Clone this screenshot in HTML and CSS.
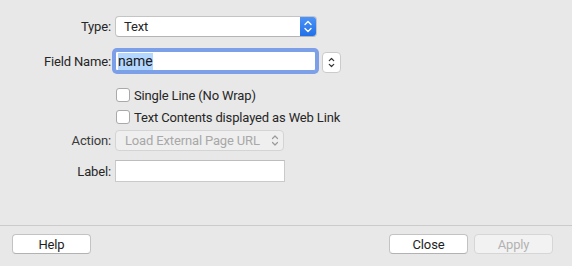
FILE: index.html
```html
<!DOCTYPE html>
<html>
<head>
    <title>Field Properties</title>
    <link rel="stylesheet" href="styles.css">
</head>
<body>
    <div class="dialog">
        <div class="form">
            <div class="row row-type">
                <span class="label">Type:</span>
                <div class="popup">
                    <span class="popup-text">Text</span>
                    <span class="popup-arrows">
                        <svg width="16" height="21" viewBox="0 0 16 21"><path d="M5 8.5 L8 5.5 L11 8.5 M5 12.5 L8 15.5 L11 12.5" fill="none" stroke="#fff" stroke-width="1.4" stroke-linecap="round" stroke-linejoin="round"/></svg>
                    </span>
                </div>
            </div>
            <div class="row row-name">
                <span class="label">Field Name:</span>
                <div class="field focused"><span class="selected">name</span></div>
                <div class="stepper">
                    <svg width="19" height="21" viewBox="0 0 19 21"><path d="M7 8.5 L9.5 6 L12 8.5 M7 12.5 L9.5 15 L12 12.5" fill="none" stroke="#333" stroke-width="1.3" stroke-linecap="round" stroke-linejoin="round"/></svg>
                </div>
            </div>
            <div class="row row-check1">
                <span class="label"></span>
                <label class="check"><span class="box"></span>Single Line (No Wrap)</label>
            </div>
            <div class="row row-check2">
                <span class="label"></span>
                <label class="check"><span class="box"></span>Text Contents displayed as Web Link</label>
            </div>
            <div class="row row-action">
                <span class="label dim">Action:</span>
                <div class="popup disabled">
                    <span class="popup-text">Load External Page URL</span>
                    <svg class="small-arrows" width="14" height="21" viewBox="0 0 14 21"><path d="M4.5 8.5 L7 6 L9.5 8.5 M4.5 12.5 L7 15 L9.5 12.5" fill="none" stroke="#9a9a9a" stroke-width="1.2" stroke-linecap="round" stroke-linejoin="round"/></svg>
                </div>
            </div>
            <div class="row row-label">
                <span class="label">Label:</span>
                <div class="field plain"></div>
            </div>
        </div>
        <div class="footer">
            <button class="btn">Help</button>
            <div class="spacer"></div>
            <button class="btn">Close</button>
            <button class="btn" disabled>Apply</button>
        </div>
    </div>
</body>
</html>
```

FILE: styles.css
```css
body {
    margin: 0;
    background-color: #e8e8e8;
    font-family: "Roboto", "Liberation Sans", sans-serif;
    font-size: 13px;
    letter-spacing: -0.15px;
    color: #262626;
}
.dialog {
    width: 572px;
    height: 266px;
}
.form {
    height: 225px;
    padding-top: 16px;
    box-sizing: border-box;
}
.row {
    display: flex;
    align-items: center;
}
.label {
    width: 111px;
    text-align: right;
    margin-right: 4px;
    flex-shrink: 0;
}
.row-type { height: 21px; }
.row-name { height: 20px; margin-top: 14px; }
.row-check1 { height: 14px; margin-top: 17px; }
.row-check2 { height: 14px; margin-top: 8px; }
.row-action { height: 21px; margin-top: 6px; }
.row-label { height: 22px; margin-top: 9px; }

.popup {
    width: 202px;
    height: 21px;
    box-sizing: border-box;
    display: flex;
    align-items: center;
    background: #fff;
    border: 1px solid #c4c4c4;
    border-bottom-color: #b4b4b4;
    border-radius: 4px;
    overflow: hidden;
}
.popup-text {
    flex: 1;
    padding-left: 8px;
    white-space: nowrap;
}
.popup-arrows {
    width: 16px;
    height: 21px;
    display: flex;
    align-items: center;
    justify-content: center;
    background: linear-gradient(#4f95f8, #1f6ee8);
}
.popup.disabled {
    width: 169px;
    background: #efefef;
    border-color: #d4d4d4;
    color: #a8a8a8;
}
.popup.disabled .popup-text {
    padding-left: 9px;
}
.small-arrows {
    margin-right: 1px;
}
.field {
    height: 20px;
    box-sizing: border-box;
    background: #fff;
}
.field.focused {
    width: 201px;
    border: 1px solid #7aa1e6;
    box-shadow: 0 0 0 3px #7c9fe8;
    border-radius: 2px;
    padding: 1px 0 0 2px;
    line-height: 17px;
    font-size: 14px;
    color: #1a1a1a;
}
.selected {
    background: #b3d7ff;
    display: inline-block;
    padding-right: 1px;
}
.field.plain {
    width: 170px;
    height: 22px;
    border: 1px solid #cacaca;
    border-top-color: #bdbdbd;
}
.stepper {
    width: 19px;
    height: 21px;
    margin-left: 6px;
    margin-top: 2px;
    box-sizing: border-box;
    background: #fff;
    border: 1px solid #cbcbcb;
    border-radius: 4px;
    display: flex;
    align-items: center;
    justify-content: center;
}
.check {
    display: flex;
    align-items: center;
    margin-left: 1px;
    white-space: nowrap;
}
.box {
    width: 14px;
    height: 14px;
    box-sizing: border-box;
    background: #fff;
    border: 1px solid #a9a9a9;
    border-radius: 3px;
    margin-right: 4px;
}
.dim {
    color: #3a3a3a;
}
.footer {
    border-top: 1px solid #cbcbcb;
    padding: 8px 19px 0 12px;
    display: flex;
}
.spacer {
    flex: 1;
}
.btn {
    width: 79px;
    height: 20px;
    margin-left: 6px;
    padding: 0;
    font-family: inherit;
    font-size: 13px;
    letter-spacing: inherit;
    color: #1e1e1e;
    background: #fff;
    border: 1px solid #c3c3c3;
    border-bottom-color: #b2b2b2;
    border-radius: 4px;
}
.btn:first-child {
    margin-left: 0;
}
.btn:disabled {
    background: #f2f2f2;
    border-color: #d6d6d6;
    color: #b3b3b3;
}
```
